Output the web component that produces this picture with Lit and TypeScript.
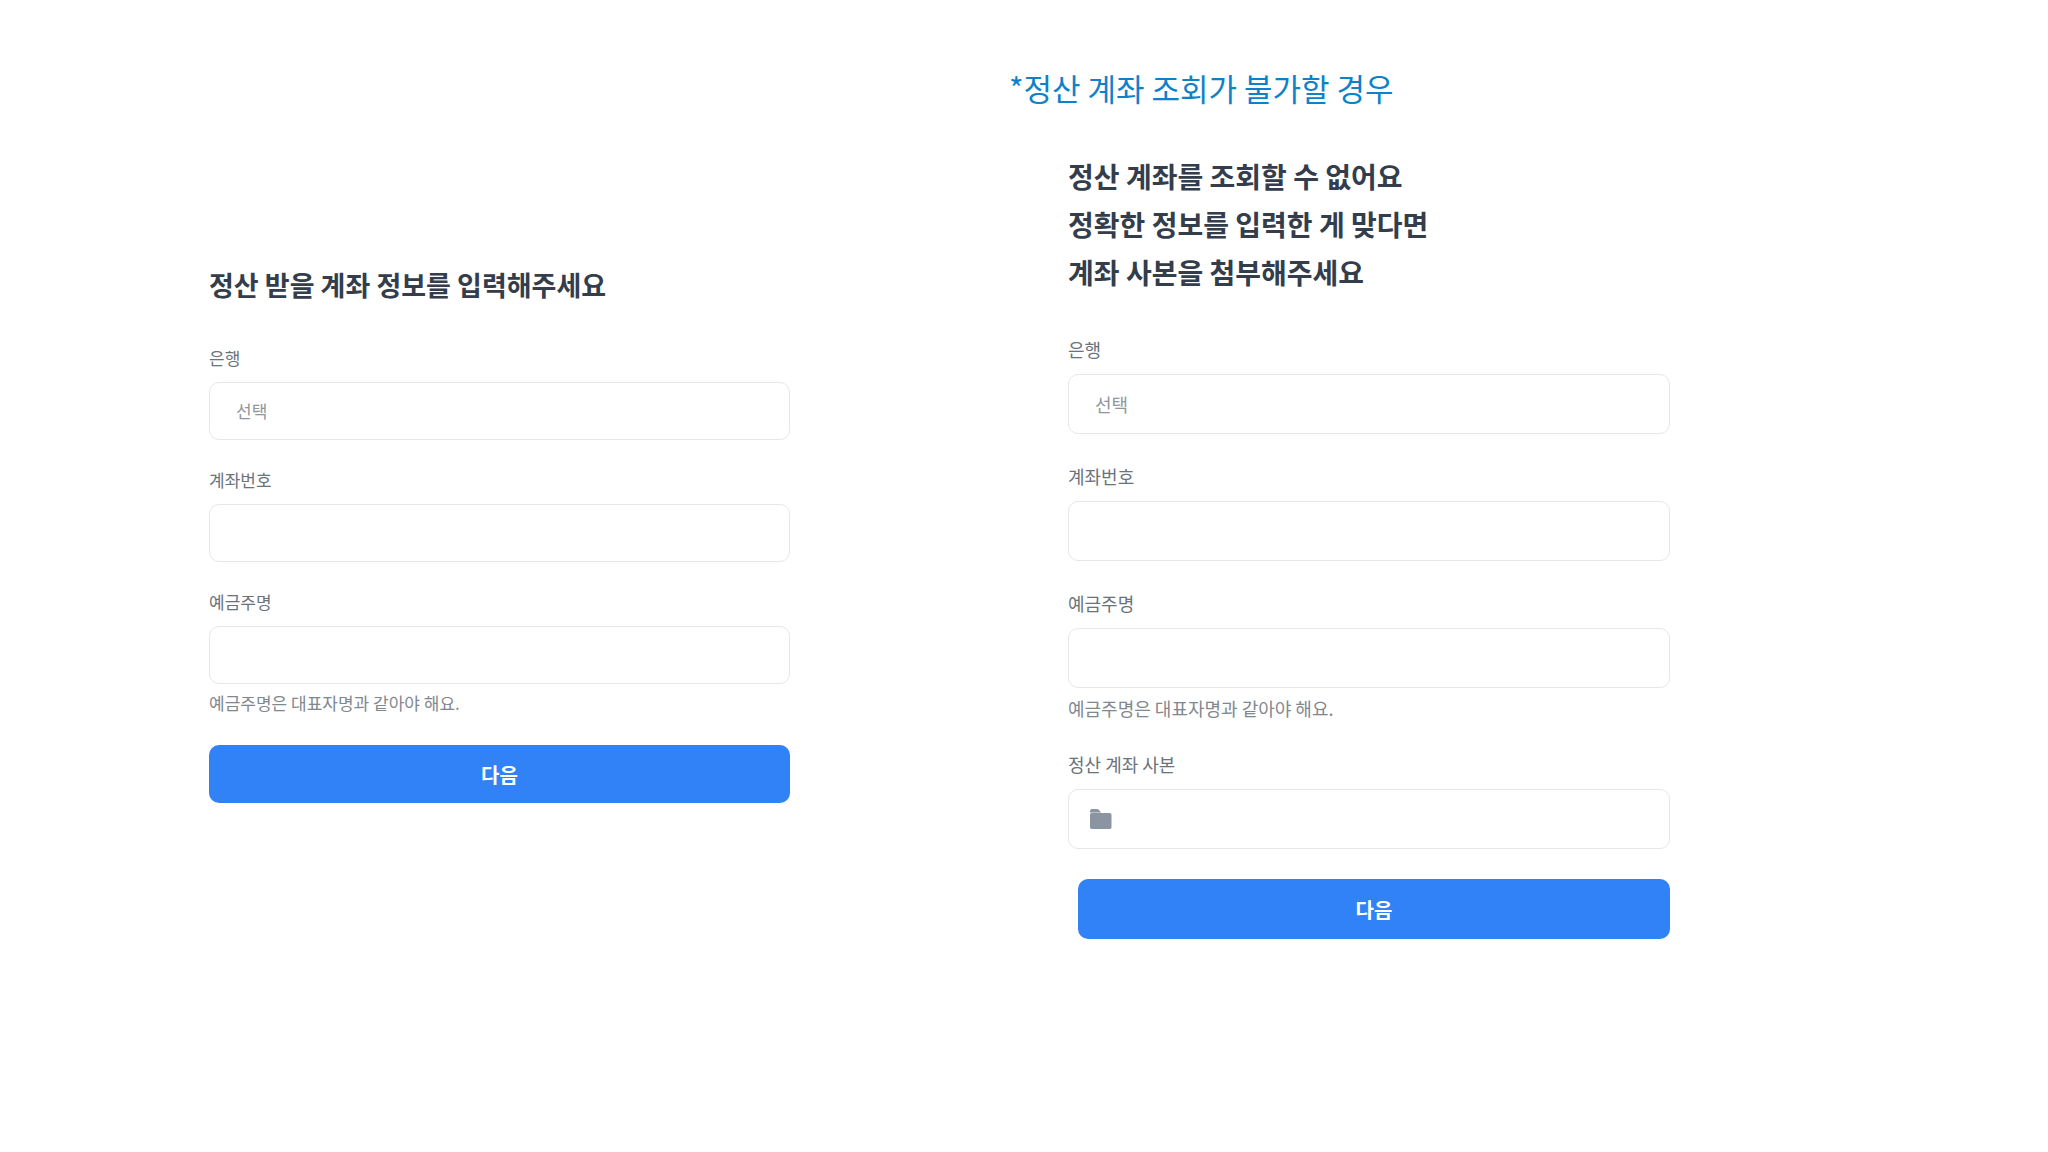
import { LitElement, html, css, nothing } from "lit";
import { customElement, property } from "lit/decorators.js";

@customElement("account-form")
class AccountForm extends LitElement {
  @property({ type: Array }) heading: string[] = [];
  @property({ type: Boolean, reflect: true }) attachment = false;

  static styles = css`
    :host {
      display: block;
      --title-size: 27px;
      --title-gap: 9px;
      --text-size: 17px;
      --text-line: 26px;
      --box-height: 58px;
      --field-gap: 27px;
      --submit-indent: 0;
    }
    :host([attachment]) {
      --title-size: 28px;
      --title-gap: 11px;
      --text-size: 18px;
      --text-line: 28px;
      --box-height: 60px;
      --field-gap: 28px;
      --submit-indent: 10px;
    }
    .form {
      display: flex;
      flex-direction: column;
      gap: var(--field-gap);
      font-size: var(--text-size);
      line-height: var(--text-line);
    }
    .title {
      margin: 0 0 var(--title-gap);
      font-size: var(--title-size);
      line-height: 48px;
      font-weight: 700;
      color: #333d4b;
    }
    .line {
      display: block;
    }
    .field {
      display: flex;
      flex-direction: column;
    }
    .label {
      margin-bottom: 11px;
      color: #6a737b;
    }
    .box {
      box-sizing: border-box;
      width: 100%;
      height: var(--box-height);
      margin: 0;
      padding: 0 26px;
      border: 1px solid #e5e7ea;
      border-radius: 10px;
      background: #fff;
      color: #8f979d;
      font: inherit;
      appearance: none;
      outline: none;
    }
    .box:focus,
    .box:focus-within {
      border-color: #3182f6;
    }
    .upload {
      display: flex;
      align-items: center;
      padding: 0 20px;
    }
    .folder {
      flex: none;
      width: 24px;
      height: 24px;
    }
    .file {
      flex: 1;
      min-width: 0;
      color: transparent;
      font: inherit;
      outline: none;
    }
    .file::file-selector-button {
      display: none;
    }
    .hint {
      margin: 6px 0 0;
      color: #7f888f;
    }
    .submit {
      height: var(--box-height);
      margin: 2px 0 0 var(--submit-indent);
      padding: 0;
      border: 0;
      border-radius: 10px;
      background: #3182f6;
      color: #fff;
      font-family: inherit;
      font-size: 20px;
      font-weight: 700;
      cursor: pointer;
    }
  `;

  render() {
    return html`
      <form class="form" @submit=${(e: Event) => e.preventDefault()}>
        <h2 class="title">
          ${this.heading.map((line) => html`<span class="line">${line}</span>`)}
        </h2>
        <div class="field">
          <label class="label" for="bank">은행</label>
          <select class="box" id="bank">
            <option>선택</option>
          </select>
        </div>
        <div class="field">
          <label class="label" for="number">계좌번호</label>
          <input class="box" id="number" type="text" inputmode="numeric" />
        </div>
        <div class="field">
          <label class="label" for="holder">예금주명</label>
          <input class="box" id="holder" type="text" aria-describedby="hint" />
          <p class="hint" id="hint">예금주명은 대표자명과 같아야 해요.</p>
        </div>
        ${this.attachment
          ? html`<div class="field">
              <label class="label" for="copy">정산 계좌 사본</label>
              <div class="box upload">
                <svg class="folder" viewBox="0 0 24 24" aria-hidden="true">
                  <path fill="#8b95a1" d="M1 5V4Q1 2 3 2H8Q9.600 2 10.500 3.500L11.500 5Z" />
                  <path fill="#b8bfc7" d="M1 5H11.500L12.200 6H1Z" />
                  <rect x="1" y="6" width="21.500" height="16" rx="1.800" fill="#8b95a1" />
                </svg>
                <input class="file" id="copy" type="file" />
              </div>
            </div>`
          : nothing}
        <button class="submit" type="submit">다음</button>
      </form>
    `;
  }
}

@customElement("app-root")
class AppRoot extends LitElement {
  static styles = css`
    :host {
      display: block;
      min-height: 100vh;
      background: #fff;
      font-family: "Noto Sans CJK KR", "Noto Sans", sans-serif;
    }
    .page {
      display: grid;
      grid-template-columns: 209fr 581fr 219fr 661fr 378fr;
      align-items: start;
    }
    .standard {
      grid-column: 2;
      padding-top: 261px;
    }
    .fallback {
      grid-column: 4;
      padding-top: 64px;
    }
    .note {
      margin: 0 0 40px;
      font-size: 31px;
      line-height: 48px;
      font-weight: 400;
      color: #0e82c8;
    }
    .indented {
      padding-left: 59px;
    }
  `;

  render() {
    return html`
      <main class="page">
        <section class="standard">
          <account-form .heading=${["정산 받을 계좌 정보를 입력해주세요"]}></account-form>
        </section>
        <section class="fallback">
          <p class="note">*정산 계좌 조회가 불가할 경우</p>
          <account-form
            class="indented"
            attachment
            .heading=${["정산 계좌를 조회할 수 없어요", "정확한 정보를 입력한 게 맞다면", "계좌 사본을 첨부해주세요"]}
          ></account-form>
        </section>
      </main>
    `;
  }
}
